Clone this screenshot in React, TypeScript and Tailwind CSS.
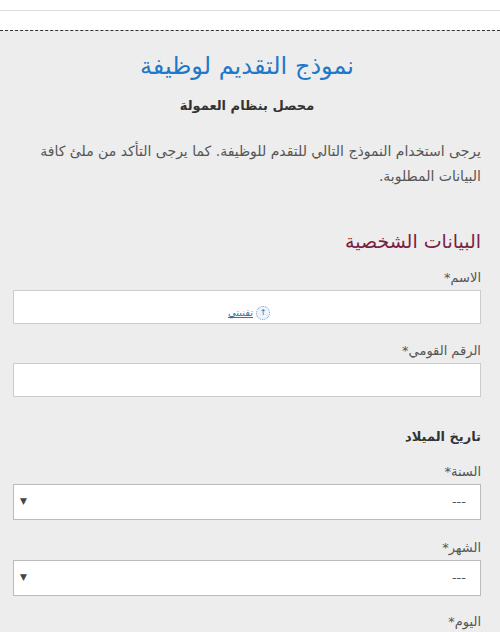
import React from "react";

const font = { fontFamily: '"DejaVu Sans", "Noto Sans", sans-serif' };

function Label({ text }: { text: string }) {
  return (
    <div className="text-[13px] leading-[18px] text-[#555] mb-[3px]">
      {text}
      <span>*</span>
    </div>
  );
}

function Select() {
  return (
    <div className="h-[36px] bg-white border border-[#bbb] flex items-center justify-between pr-[14px] pl-[6px] text-[13px] text-[#555]">
      <span>---</span>
      <span className="text-[9px] text-[#444]">▼</span>
    </div>
  );
}

export default function App() {
  return (
    <div dir="rtl" className="w-[500px] min-h-[632px] bg-[#ededed]" style={font}>
      <div className="bg-white h-[30px] pt-[10px]">
        <div className="h-px bg-[#ddd]" />
      </div>
      <div className="border-t border-dashed border-[#333]" />
      <div className="pr-[19px] pl-[13px]">
        <h1 className="text-center text-[24px] text-[#1f78c8] pt-[19px] leading-[32px]">
          نموذج التقديم لوظيفة
        </h1>
        <div className="text-center text-[13px] font-bold text-[#333] mt-[14px] leading-[20px]">
          محصل بنظام العمولة
        </div>
        <p className="text-[14px] leading-[25px] text-[#555] mt-[23px] pl-[2px]">
          يرجى استخدام النموذج التالي للتقدم للوظيفة. كما يرجى التأكد من ملئ كافة البيانات المطلوبة.
        </p>
        <h2 className="text-[19px] text-[#7a1f45] mt-[39px] leading-[26px]">البيانات الشخصية</h2>
        <div className="mt-[15px]">
          <Label text="الاسم" />
          <div className="h-[34px] bg-white border border-[#ccc] flex items-end justify-center pb-[3px]">
            <div className="flex items-center gap-[3px] pl-[4px]">
              <span className="w-[14px] h-[14px] rounded-full border border-dotted border-[#6a9fd0] bg-[#eef4fa] flex items-center justify-center text-[8px] text-[#2a6db0]">
                ↑
              </span>
              <span className="text-[10px] text-[#3a6fa8] underline">تقنيتي</span>
            </div>
          </div>
        </div>
        <div className="mt-[18px]">
          <Label text="الرقم القومي" />
          <div className="h-[34px] bg-white border border-[#ccc]" />
        </div>
        <div className="text-[13px] font-bold text-[#333] mt-[30px] leading-[20px]">تاريخ الميلاد</div>
        <div className="mt-[16px]">
          <Label text="السنة" />
          <Select />
        </div>
        <div className="mt-[19px]">
          <Label text="الشهر" />
          <Select />
        </div>
        <div className="mt-[17px]">
          <Label text="اليوم" />
        </div>
      </div>
    </div>
  );
}
